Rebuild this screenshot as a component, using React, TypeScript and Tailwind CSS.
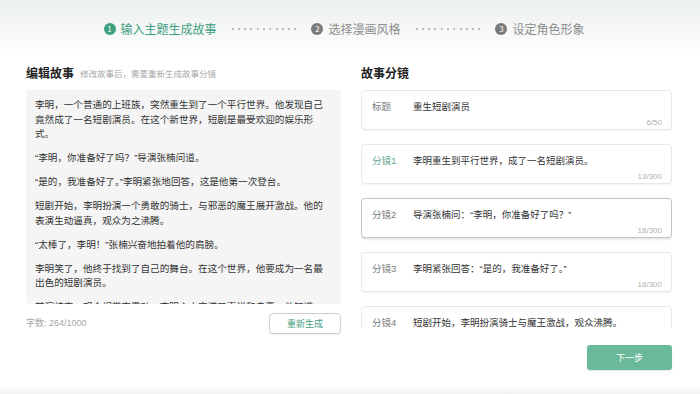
import React from 'react';

const paragraphs = [
  '李明，一个普通的上班族，突然重生到了一个平行世界。他发现自己竟然成了一名短剧演员。在这个新世界，短剧是最受欢迎的娱乐形式。',
  '“李明，你准备好了吗？”导演张楠问道。',
  '“是的，我准备好了。”李明紧张地回答，这是他第一次登台。',
  '短剧开始，李明扮演一个勇敢的骑士，与邪恶的魔王展开激战。他的表演生动逼真，观众为之沸腾。',
  '“太棒了，李明！”张楠兴奋地拍着他的肩膀。',
  '李明笑了，他终于找到了自己的舞台。在这个世界，他要成为一名最出色的短剧演员。',
  '首演结束，观众们掌声雷动。李明心中充满了喜悦和自豪，他知道，这只是一个开始。',
];

const shots = [
  { label: '标题', text: '重生短剧演员', count: '6/50' },
  { label: '分镜1', text: '李明重生到平行世界，成了一名短剧演员。', count: '13/300', accent: true },
  { label: '分镜2', text: '导演张楠问：“李明，你准备好了吗？”', count: '18/300', active: true },
  { label: '分镜3', text: '李明紧张回答：“是的，我准备好了。”', count: '18/300' },
  { label: '分镜4', text: '短剧开始，李明扮演骑士与魔王激战，观众沸腾。', count: '21/300' },
];

const Dots = () => (
  <div className="flex items-center gap-[4.3px] mx-[15px]">
    {Array.from({ length: 11 }).map((_, i) => (
      <span key={i} className="w-[2px] h-[2px] rounded-full bg-[#a8a8a8]" />
    ))}
  </div>
);

const Step = ({ n, label, done }: { n: number; label: string; done?: boolean }) => (
  <div className="flex items-center gap-[5px]">
    <span
      className={`w-[12px] h-[12px] rounded-full flex items-center justify-center text-[8px] leading-none text-white ${done ? 'bg-[#3f9f80]' : 'bg-[#7a7a7a]'}`}
    >
      {n}
    </span>
    <span className={`text-[12px] leading-none ${done ? 'text-[#3f9f80]' : 'text-[#8c8c8c]'}`}>{label}</span>
  </div>
);

export default function App() {
  return (
    <div className="w-[700px] h-[394px] bg-white flex flex-col overflow-hidden font-['Noto_Sans_CJK_SC','Noto_Sans',sans-serif]">
      {/* 步骤条 */}
      <div className="h-[58px] shrink-0 flex items-center justify-center pr-[12px] bg-gradient-to-b from-[#ecf0ef] to-white">
        <Step n={1} label="输入主题生成故事" done />
        <Dots />
        <Step n={2} label="选择漫画风格" />
        <Dots />
        <Step n={3} label="设定角色形象" />
      </div>

      <div className="flex-1 flex gap-[20px] px-[26px] pt-[7px] min-h-0">
        {/* 左侧：编辑故事 */}
        <div className="w-[315px] flex flex-col">
          <div className="h-[16px] flex items-center gap-[6px] mb-[9px]">
            <span className="text-[12px] font-bold text-[#222]">编辑故事</span>
            <span className="text-[8.5px] text-[#a6a6a6]">修改故事后，需要重新生成故事分镜</span>
          </div>
          <div className="h-[214px] bg-[#f5f5f5] rounded-[3px] px-[9px] pt-[8px] overflow-hidden">
            <div className="w-[292px] text-[9.6px] leading-[14.5px] text-[#333] font-['Liberation_Sans','Noto_Sans_CJK_SC',sans-serif]">
              {paragraphs.map((p, i) => (
                <p key={i} className="mb-[9.5px]">
                  {p}
                </p>
              ))}
            </div>
          </div>
          <div className="flex items-center justify-between mt-[9px]">
            <span className="text-[9px] text-[#a8a8a8] font-['Liberation_Sans','Noto_Sans_CJK_SC',sans-serif]">字数: 264/1000</span>
            <button className="w-[72px] h-[21px] rounded-[4px] border border-[#d0d0d0] bg-white shadow-[0_1px_2px_rgba(0,0,0,0.08)] text-[9px] text-[#3f9f80]">
              重新生成
            </button>
          </div>
        </div>

        {/* 右侧：故事分镜 */}
        <div className="w-[311px] flex flex-col">
          <div className="h-[16px] flex items-center mb-[9px]">
            <span className="text-[12px] font-bold text-[#222]">故事分镜</span>
          </div>
          <div className="h-[238px] overflow-hidden flex flex-col gap-[14px]">
            {shots.map((s) => (
              <div
                key={s.label}
                className={`h-[40px] shrink-0 rounded-[4px] bg-white border flex flex-col ${s.active ? 'border-[#c4c4c4] shadow-[0_1px_3px_rgba(0,0,0,0.15)]' : 'border-[#e8e8e8] shadow-[0_1px_2px_rgba(0,0,0,0.05)]'}`}
              >
                <div className="flex items-center h-[12px] mt-[10px] pl-[10px] text-[9.5px] font-['Liberation_Sans','Noto_Sans_CJK_SC',sans-serif]">
                  <span className={`w-[41px] shrink-0 ${s.accent ? 'text-[#5fa58c]' : 'text-[#7a7a7a]'}`}>{s.label}</span>
                  <span className="text-[#333] truncate">{s.text}</span>
                </div>
                <div className="h-[10px] mt-[5px] pr-[9px] text-right text-[8px] leading-[10px] text-[#b0b0b0] font-['Liberation_Sans',sans-serif]">
                  {s.count}
                </div>
              </div>
            ))}
          </div>
          <button className="self-end mt-[17px] w-[85px] h-[25px] rounded-[3px] bg-[#6bb99b] text-white text-[9px] shadow-[0_1px_2px_rgba(0,0,0,0.1)]">
            下一步
          </button>
        </div>
      </div>

      <div className="h-[6px] shrink-0 bg-gradient-to-b from-[#fafafa] to-[#f2f2f2]" />
    </div>
  );
}
